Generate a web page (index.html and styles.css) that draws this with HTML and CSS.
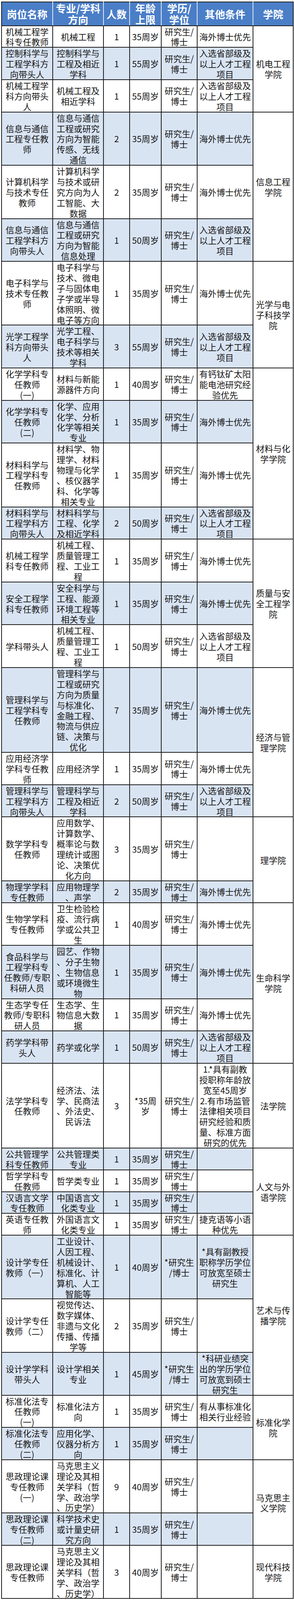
FILE: index.html
```html
<!DOCTYPE html>
<html lang="zh-CN">
<head>
<meta charset="utf-8">
<title>岗位需求表</title>
<link rel="stylesheet" href="styles.css">
</head>
<body>
<div class="page">
<table class="tbl">
<colgroup>
<col class="c1"><col class="c2"><col class="c3"><col class="c4"><col class="c5"><col class="c6"><col class="c7">
</colgroup>
<thead>
<tr class="hd">
<th><span>岗位名称</span></th><th><span>专业/学科</span><span>方向</span></th><th><span>人数</span></th><th><span>年龄</span><span>上限</span></th><th><span>学历/</span><span>学位</span></th><th><span>其他条件</span></th><th class="hd-last"><span>学院</span></th>
</tr>
</thead>
<tbody>
<tr><td><span>机械工程学</span><span>科专任教师</span></td><td><span>机械工程</span></td><td><span>1</span></td><td><span>35周岁</span></td><td><span>研究生/</span><span>博士</span></td><td><span>海外博士优先</span></td><td class="college" rowspan="3"><span>机电工程</span><span>学院</span></td></tr>
<tr class="alt"><td><span>控制科学与</span><span>工程学科方</span><span>向带头人</span></td><td><span>控制科学与</span><span>工程及相近</span><span>学科</span></td><td><span>1</span></td><td><span>55周岁</span></td><td><span>研究生/</span><span>博士</span></td><td><span>入选省部级及</span><span>以上人才工程</span><span>项目</span></td></tr>
<tr><td><span>机械工程学</span><span>科方向带头</span><span>人</span></td><td><span>机械工程及</span><span>相近学科</span></td><td><span>1</span></td><td><span>55周岁</span></td><td><span>研究生/</span><span>博士</span></td><td><span>入选省部级及</span><span>以上人才工程</span><span>项目</span></td></tr>
<tr class="alt"><td><span>信息与通信</span><span>工程专任教</span><span>师</span></td><td><span>信息与通信</span><span>工程或研究</span><span>方向为智能</span><span>传感、无线</span><span>通信</span></td><td><span>2</span></td><td><span>35周岁</span></td><td><span>研究生/</span><span>博士</span></td><td><span>海外博士优先</span></td><td class="college" rowspan="3"><span>信息工程</span><span>学院</span></td></tr>
<tr><td><span>计算机科学</span><span>与技术专任</span><span>教师</span></td><td><span>计算机科学</span><span>与技术或研</span><span>究方向为人</span><span>工智能、大</span><span>数据</span></td><td><span>2</span></td><td><span>35周岁</span></td><td><span>研究生/</span><span>博士</span></td><td><span>海外博士优先</span></td></tr>
<tr class="alt"><td><span>信息与通信</span><span>工程学科方</span><span>向带头人</span></td><td><span>信息与通信</span><span>工程或研究</span><span>方向为智能</span><span>信息处理</span></td><td><span>1</span></td><td><span>50周岁</span></td><td><span>研究生/</span><span>博士</span></td><td><span>入选省部级及</span><span>以上人才工程</span><span>项目</span></td></tr>
<tr><td><span>电子科学与</span><span>技术专任教</span><span>师</span></td><td><span>电子科学与</span><span>技术、微电</span><span>子与固体电</span><span>子学或半导</span><span>体照明、微</span><span>电子等方向</span></td><td><span>1</span></td><td><span>35周岁</span></td><td><span>研究生/</span><span>博士</span></td><td><span>海外博士优先</span></td><td class="college" rowspan="2"><span>光学与电</span><span>子科技学</span><span>院</span></td></tr>
<tr class="alt"><td><span>光学工程学</span><span>科方向带头</span><span>人</span></td><td><span>光学工程、</span><span>电子科学与</span><span>技术等相关</span><span>学科</span></td><td><span>3</span></td><td><span>55周岁</span></td><td><span>研究生/</span><span>博士</span></td><td><span>入选省部级及</span><span>以上人才工程</span><span>项目</span></td></tr>
<tr><td><span>化学学科专</span><span>任教师</span><span>(一)</span></td><td><span>材料与新能</span><span>源器件方向</span></td><td><span>1</span></td><td><span>40周岁</span></td><td><span>研究生/</span><span>博士</span></td><td><span>有钙钛矿太阳</span><span>能电池研究经</span><span>验优先</span></td><td class="college" rowspan="4"><span>材料与化</span><span>学学院</span></td></tr>
<tr class="alt"><td><span>化学学科专</span><span>任教师</span><span>(二)</span></td><td><span>化学、应用</span><span>化学、分析</span><span>化学等相关</span><span>专业</span></td><td><span>1</span></td><td><span>35周岁</span></td><td><span>研究生/</span><span>博士</span></td><td><span>海外博士优先</span></td></tr>
<tr><td><span>材料科学与</span><span>工程学科专</span><span>任教师</span></td><td><span>材料学、物</span><span>理学、材料</span><span>物理与化学</span><span>、核仪器学</span><span>科、化学等</span><span>相关专业</span></td><td><span>1</span></td><td><span>35周岁</span></td><td><span>研究生/</span><span>博士</span></td><td><span>海外博士优先</span></td></tr>
<tr class="alt"><td><span>材料科学与</span><span>工程学科方</span><span>向带头人</span></td><td><span>材料科学与</span><span>工程、化学</span><span>及相近学科</span></td><td><span>2</span></td><td><span>50周岁</span></td><td><span>研究生/</span><span>博士</span></td><td><span>入选省部级及</span><span>以上人才工程</span><span>项目</span></td></tr>
<tr><td><span>机械工程学</span><span>科专任教师</span></td><td><span>机械工程、</span><span>质量管理工</span><span>程、工业工</span><span>程</span></td><td><span>1</span></td><td><span>35周岁</span></td><td><span>研究生/</span><span>博士</span></td><td><span>海外博士优先</span></td><td class="college" rowspan="3"><span>质量与安</span><span>全工程学</span><span>院</span></td></tr>
<tr class="alt"><td><span>安全工程学</span><span>科专任教师</span></td><td><span>安全科学与</span><span>工程、能源</span><span>环境工程等</span><span>相关专业</span></td><td><span>1</span></td><td><span>35周岁</span></td><td><span>研究生/</span><span>博士</span></td><td><span>海外博士优先</span></td></tr>
<tr><td><span>学科带头人</span></td><td><span>机械工程、</span><span>质量管理工</span><span>程、工业工</span><span>程</span></td><td><span>1</span></td><td><span>50周岁</span></td><td><span>研究生/</span><span>博士</span></td><td><span>入选省部级及</span><span>以上人才工程</span><span>项目</span></td></tr>
<tr class="alt"><td><span>管理科学与</span><span>工程学科专</span><span>任教师</span></td><td><span>管理科学与</span><span>工程或研究</span><span>方向为质量</span><span>与标准化、</span><span>金融工程、</span><span>物流与供应</span><span>链、决策与</span><span>优化</span></td><td><span>7</span></td><td><span>35周岁</span></td><td><span>研究生/</span><span>博士</span></td><td><span>海外博士优先</span></td><td class="college" rowspan="3"><span>经济与管</span><span>理学院</span></td></tr>
<tr><td><span>应用经济学</span><span>学科专任教</span><span>师</span></td><td><span>应用经济学</span></td><td><span>1</span></td><td><span>35周岁</span></td><td><span>研究生/</span><span>博士</span></td><td><span>海外博士优先</span></td></tr>
<tr class="alt"><td><span>管理科学与</span><span>工程学科方</span><span>向带头人</span></td><td><span>管理科学与</span><span>工程及相近</span><span>学科</span></td><td><span>2</span></td><td><span>50周岁</span></td><td><span>研究生/</span><span>博士</span></td><td><span>入选省部级及</span><span>以上人才工程</span><span>项目</span></td></tr>
<tr><td><span>数学学科专</span><span>任教师</span></td><td><span>应用数学、</span><span>计算数学、</span><span>概率论与数</span><span>理统计或图</span><span>论、决策优</span><span>化方向</span></td><td><span>3</span></td><td><span>35周岁</span></td><td><span>研究生/</span><span>博士</span></td><td></td><td class="college" rowspan="2"><span>理学院</span></td></tr>
<tr class="alt"><td><span>物理学学科</span><span>专任教师</span></td><td><span>应用物理学</span><span>、声学</span></td><td><span>2</span></td><td><span>35周岁</span></td><td><span>研究生/</span><span>博士</span></td><td><span>海外博士优先</span></td></tr>
<tr><td><span>生物学学科</span><span>专任教师</span></td><td><span>卫生检验检</span><span>疫、流行病</span><span>学或公共卫</span><span>生</span></td><td><span>1</span></td><td><span>40周岁</span></td><td><span>研究生/</span><span>博士</span></td><td><span>海外博士优先</span></td><td class="college" rowspan="4"><span>生命科学</span><span>学院</span></td></tr>
<tr class="alt"><td><span>食品科学与</span><span>工程学科专</span><span>任教师/专职</span><span>科研人员</span></td><td><span>园艺、作物</span><span>、分子生物</span><span>、生物信息</span><span>或环境微生</span><span>物</span></td><td><span>1</span></td><td><span>35周岁</span></td><td><span>研究生/</span><span>博士</span></td><td><span>海外博士优先</span></td></tr>
<tr><td><span>生态学专任</span><span>教师/专职科</span><span>研人员</span></td><td><span>生态学、生</span><span>物信息大数</span><span>据</span></td><td><span>1</span></td><td><span>35周岁</span></td><td><span>研究生/</span><span>博士</span></td><td><span>海外博士优先</span></td></tr>
<tr class="alt"><td><span>药学学科带</span><span>头人</span></td><td><span>药学或化学</span></td><td><span>1</span></td><td><span>50周岁</span></td><td><span>研究生/</span><span>博士</span></td><td><span>入选省部级及</span><span>以上人才工程</span><span>项目</span></td></tr>
<tr><td><span>法学学科专</span><span>任教师</span></td><td><span>经济法、法</span><span>学、民商法</span><span>、外法史、</span><span>民诉法</span></td><td><span>3</span></td><td><span>*35周</span><span>岁</span></td><td><span>研究生/</span><span>博士</span></td><td><span>1.*具有副教</span><span>授职称年龄放</span><span>宽至45周岁</span><span>2.有市场监管</span><span>法律相关项目</span><span>研究经验和质</span><span>量、标准方面</span><span>研究的优先</span></td><td class="college"><span>法学院</span></td></tr>
<tr class="alt"><td><span>公共管理学</span><span>科专任教师</span></td><td><span>公共管理类</span><span>专业</span></td><td><span>1</span></td><td><span>35周岁</span></td><td><span>研究生/</span><span>博士</span></td><td></td><td class="college" rowspan="4"><span>人文与外</span><span>语学院</span></td></tr>
<tr><td><span>哲学学科专</span><span>任教师</span></td><td><span>哲学类专业</span></td><td><span>1</span></td><td><span>35周岁</span></td><td><span>研究生/</span><span>博士</span></td><td></td></tr>
<tr class="alt"><td><span>汉语言文学</span><span>专任教师</span></td><td><span>中国语言文</span><span>化类专业</span></td><td><span>1</span></td><td><span>35周岁</span></td><td><span>研究生/</span><span>博士</span></td><td></td></tr>
<tr><td><span>英语专任教</span><span>师</span></td><td><span>外国语言文</span><span>化类专业</span></td><td><span>1</span></td><td><span>35周岁</span></td><td><span>研究生/</span><span>博士</span></td><td><span>捷克语等小语</span><span>种优先</span></td></tr>
<tr class="alt"><td><span>设计学专任</span><span>教师（一）</span></td><td><span>工业设计、</span><span>人因工程、</span><span>机械设计、</span><span>标准化、计</span><span>算机、人工</span><span>智能等</span></td><td><span>1</span></td><td><span>40周岁</span></td><td><span>*研究生</span><span>/博士</span></td><td><span>*具有副教授</span><span>职称学历学位</span><span>可放宽至硕士</span><span>研究生</span></td><td class="college" rowspan="3"><span>艺术与传</span><span>播学院</span></td></tr>
<tr><td><span>设计学专任</span><span>教师（二）</span></td><td><span>视觉传达、</span><span>数字媒体、</span><span>非遗与文化</span><span>传播、传播</span><span>学等</span></td><td><span>2</span></td><td><span>35周岁</span></td><td><span>研究生/</span><span>博士</span></td><td></td></tr>
<tr class="alt"><td><span>设计学学科</span><span>带头人</span></td><td><span>设计学相关</span><span>专业</span></td><td><span>1</span></td><td><span>45周岁</span></td><td><span>*研究生</span><span>/博士</span></td><td><span>*科研业绩突</span><span>出的学历学位</span><span>可放宽到硕士</span><span>研究生</span></td></tr>
<tr><td><span>标准化法专</span><span>任教师</span><span>(一)</span></td><td><span>标准化法方</span><span>向</span></td><td><span>1</span></td><td><span>35周岁</span></td><td><span>研究生/</span><span>博士</span></td><td><span>有从事标准化</span><span>相关行业经验</span></td><td class="college" rowspan="2"><span>标准化学</span><span>院</span></td></tr>
<tr class="alt"><td><span>标准化法专</span><span>任教师</span><span>(二)</span></td><td><span>应用化学、</span><span>仪器分析方</span><span>向</span></td><td><span>1</span></td><td><span>35周岁</span></td><td><span>研究生/</span><span>博士</span></td><td></td></tr>
<tr><td><span>思政理论课</span><span>专任教师</span><span>(一)</span></td><td><span>马克思主义</span><span>理论及其相</span><span>关学科（哲</span><span>学、政治学</span><span>、历史学）</span></td><td><span>9</span></td><td><span>40周岁</span></td><td><span>研究生/</span><span>博士</span></td><td></td><td class="college" rowspan="2"><span>马克思主</span><span>义学院</span></td></tr>
<tr class="alt"><td><span>思政理论课</span><span>专任教师</span><span>(二)</span></td><td><span>科学技术史</span><span>或计量史研</span><span>究方向</span></td><td><span>1</span></td><td><span>35周岁</span></td><td><span>研究生/</span><span>博士</span></td><td></td></tr>
<tr><td><span>思政理论课</span><span>专任教师</span></td><td><span>马克思主义</span><span>理论及其相</span><span>关学科（哲</span><span>学、政治学</span><span>、历史学）</span></td><td><span>3</span></td><td><span>40周岁</span></td><td><span>研究生/</span><span>博士</span></td><td></td><td class="college"><span>现代科技</span><span>学院</span></td></tr>
</tbody>
</table>
</div>
</body>
</html>
```
FILE: styles.css
```css
html, body {
  margin: 0;
  padding: 0;
  background: #ffffff;
}

.page {
  padding: 4px 0 0 3px;
  font-family: "Noto Sans CJK SC", "Noto Sans", sans-serif;
  color: #161616;
}

.tbl {
  border-collapse: collapse;
  table-layout: fixed;
  width: 747px;
}

.c1 { width: 131px; }
.c2 { width: 130px; }
.c3 { width: 67px; }
.c4 { width: 81px; }
.c5 { width: 92px; }
.c6 { width: 143px; }
.c7 { width: 103px; }

.tbl th,
.tbl td {
  border: 2px solid #1d1d1d;
  padding: 0;
  text-align: center;
  vertical-align: middle;
  white-space: nowrap;
}

.tbl th span,
.tbl td span {
  display: block;
  overflow: visible;
}

.hd th {
  background: #4a7ec7;
  color: #ffffff;
  font-size: 26px;
  font-weight: 700;
  border-left-color: #dfe8f5;
  border-right-color: #dfe8f5;
}

.hd th span {
  height: 29.25px;
  line-height: 29.25px;
}

.hd th:first-child {
  border-left-color: #1d1d1d;
}

.hd th.hd-last {
  border-right-color: #1d1d1d;
}

.tbl td {
  font-size: 22px;
  background: #ffffff;
}

.tbl td span {
  height: 26.9px;
  line-height: 26.9px;
}

.tbl tr.alt td {
  background: #d9e4f3;
}

.tbl td.college,
.tbl tr.alt td.college {
  background: #ffffff;
}
```
